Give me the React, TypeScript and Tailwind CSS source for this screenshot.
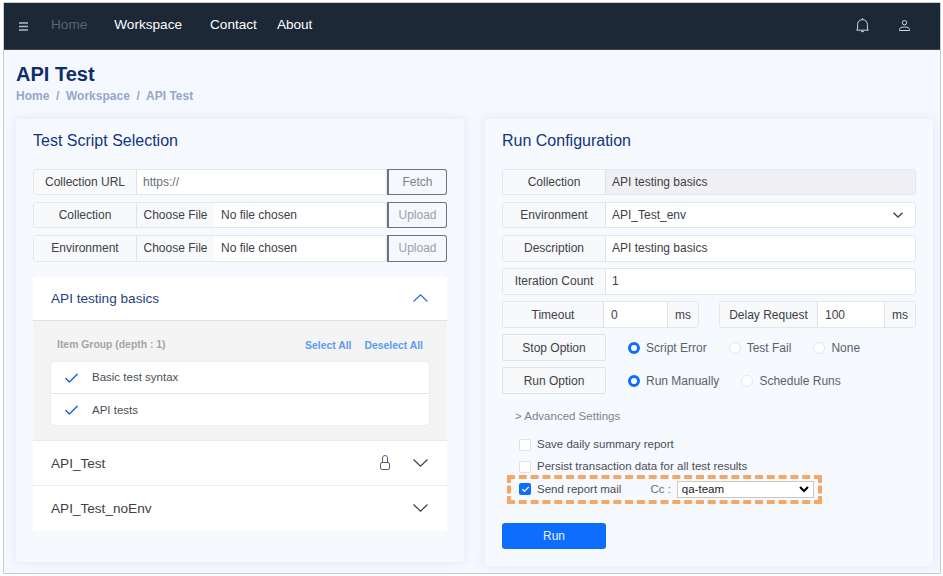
import React from "react";
import { Check } from "lucide-react";

const cellLabel =
  "flex items-center justify-center bg-[#f8f9fa] text-[#3d4148] shrink-0 border-r border-[#dee2e6]";

function Chevron({ up, className }: { up?: boolean; className?: string }) {
  return (
    <svg width="15" height="8" viewBox="0 0 15 8" fill="none" stroke="currentColor" strokeWidth="1.2" className={className}>
      <path d={up ? "M0.5 7.5 7.5 0.8 14.5 7.5" : "M0.5 0.5 7.5 7.2 14.5 0.5"} />
    </svg>
  );
}

function Row({ label, children }: { label: string; children: React.ReactNode }) {
  return (
    <div className="flex h-[26.4px] rounded-[3px] border border-[#e3e6ec] overflow-hidden bg-white">
      <div className={`${cellLabel} w-[103px]`}>{label}</div>
      {children}
    </div>
  );
}

function FileRow({ label }: { label: string }) {
  return (
    <div className="flex h-[26.4px]">
      <div className="flex flex-1 rounded-l-[3px] border border-[#e3e6ec] overflow-hidden bg-white">
        <div className={`${cellLabel} w-[103px]`}>{label}</div>
        <div className="flex items-center justify-center w-[77px] bg-[#f8f9fa] text-[#3d4148]">Choose File</div>
        <div className="flex items-center pl-[7px] text-[#3d4148]">No file chosen</div>
      </div>
      <button className="w-[60px] rounded-r-[3px] border border-[#6c757d] border-l-2 text-[#9aa0a8] bg-[#f5f8ff]">
        Upload
      </button>
    </div>
  );
}

function Radio({ label, on }: { label: string; on?: boolean }) {
  return (
    <div className="flex items-center gap-[6px] text-[#5d6168]">
      {on ? (
        <span className="size-[12px] rounded-full border-[3.5px] border-[#0d6efd] bg-white" />
      ) : (
        <span className="size-[12px] rounded-full border border-[#e3e6ec] bg-white" />
      )}
      {label}
    </div>
  );
}

function Box({ label }: { label: string }) {
  return (
    <div className="flex items-center gap-[6px] pl-[17px] h-[22px] text-[#4a4e55] text-[11.5px]">
      <span className="size-[12px] rounded-[2px] border border-[#dfe2e8] bg-white" />
      {label}
    </div>
  );
}

export default function App() {
  return (
    <div className="h-[576px] w-[943px] bg-white pt-[2px] pl-[3px] pr-[2px] pb-[2px] font-['Liberation_Sans',sans-serif] text-[12px]">
      <div className="h-full flex flex-col border border-[#c9ccd1] bg-[#f5f8ff] overflow-hidden">
        <nav className="h-[47px] shrink-0 bg-[#1c2835] border-b border-[#3e4853] flex items-center text-[13.6px] text-white pl-[15px] pr-[30px] pb-[1px]">
          <svg width="9" height="9" viewBox="0 0 9 9" stroke="#b4b9be" strokeWidth="1.4" className="mr-[23px] mt-[2px]">
            <path d="M0 1h9M0 4.5h9M0 8h9" />
          </svg>
          <span className="text-[#5a636e] mr-[27px]">Home</span>
          <span className="mr-[28px]">Workspace</span>
          <span className="mr-[20px]">Contact</span>
          <span>About</span>
          <svg width="13" height="15" viewBox="0 0 13 15" fill="none" stroke="#d3d7db" strokeWidth="1" className="ml-auto mr-[30px] -mt-[1px]">
            <path d="M1.6 11V6.5a4.9 4.9 0 0 1 9.8 0V11l1 1.2H.6Z" />
            <path d="M6.5 .2v1.4M5.2 13.6h2.6" />
          </svg>
          <svg width="11" height="11" viewBox="0 0 11 11" fill="none" stroke="#d3d7db" strokeWidth="1" className="-mt-[1px]">
            <circle cx="5.5" cy="2.7" r="2.2" />
            <path d="M.5 10.5v-1C.5 8 2 7 5.5 7s5 1 5 2.5v1Z" />
          </svg>
        </nav>

        <div className="px-[12px] pt-[12px] h-[69px] shrink-0">
          <h1 className="text-[20px] leading-[24px] font-bold text-[#0f2d6e]">API Test</h1>
          <div className="mt-[3px] font-bold text-[#97a6c9] leading-[14px]">Home &nbsp;/&nbsp; Workspace &nbsp;/&nbsp; API Test</div>
        </div>

        <div className="flex items-start gap-[21px] pl-[12px]">
          <section className="w-[448px] shrink-0 h-[443px] rounded-[4px] bg-[#f6f9fe] shadow-[0_0_12px_rgba(90,110,160,0.12)] px-[17px] pt-[13px]">
            <h2 className="text-[16px] leading-[18px] text-[#12357f] mb-[19px]">Test Script Selection</h2>
            <div className="flex flex-col gap-[6.7px]">
              <div className="flex h-[26.4px]">
                <div className="flex flex-1 rounded-l-[3px] border border-[#e3e6ec] overflow-hidden bg-white">
                  <div className={`${cellLabel} w-[103px]`}>Collection URL</div>
                  <div className="flex items-center pl-[6px] text-[#6c7076]">https://</div>
                </div>
                <button className="w-[60px] rounded-r-[3px] border border-[#6c757d] border-l-2 text-[#7d838b] bg-[#f5f8ff]">
                  Fetch
                </button>
              </div>
              <FileRow label="Collection" />
              <FileRow label="Environment" />
            </div>

            <div className="mt-[15.4px] rounded-[3px] bg-white overflow-hidden">
              <div className="flex items-center h-[44px] pl-[18px] pr-[19px] text-[13.6px] text-[#1f3f7f] border-b border-[#dfe1e4]">
                <span className="mt-[2px]">API testing basics</span>
                <Chevron up className="ml-auto text-[#2f6fd6]" />
              </div>
              <div className="h-[120px] bg-[#f4f4f4] px-[18px] pt-[16px] border-b border-[#e9e9e9]">
                <div className="flex items-start px-[6px] text-[10.4px] font-bold h-[25px]">
                  <span className="text-[#a3a5a9]">Item Group (depth : 1)</span>
                  <span className="ml-auto text-[#5b9bf5] mt-[1px]">Select All</span>
                  <span className="ml-[13px] text-[#5b9bf5] mt-[1px]">Deselect All</span>
                </div>
                <div className="rounded-[3px] bg-white shadow-[0_0_2px_rgba(0,0,0,0.12)] text-[11.5px] text-[#4a4e55]">
                  <div className="flex items-center h-[32px] pl-[12px] border-b border-[#e3e5e8]">
                    <Check className="size-[17px] text-[#1f62c4] mr-[12px] mt-[2px]" strokeWidth={2} />
                    <span>Basic test syntax</span>
                  </div>
                  <div className="flex items-center h-[31px] pl-[12px]">
                    <Check className="size-[17px] text-[#1f62c4] mr-[12px] mt-[2px]" strokeWidth={2} />
                    <span className="mt-[2px]">API tests</span>
                  </div>
                </div>
              </div>
              <div className="flex items-center h-[45px] pl-[18px] pr-[19px] text-[13.6px] text-[#3d4148] border-b border-[#ececec]">
                <span className="mt-[2px]">API_Test</span>
                <svg width="10" height="15" viewBox="0 0 10 15" fill="none" stroke="#5a5d78" strokeWidth="1" className="ml-auto mr-[23px]">
                  <rect x=".5" y="7.5" width="9" height="7" rx="1.5" />
                  <path d="M2.5 7.5V3a2.5 2.5 0 0 1 5 0v4.5" />
                </svg>
                <Chevron className="text-[#3d4148]" />
              </div>
              <div className="flex items-center justify-between h-[45px] pl-[18px] pr-[19px] text-[13.6px] text-[#3d4148]">
                <span className="mt-[2px]">API_Test_noEnv</span>
                <Chevron className="text-[#3d4148]" />
              </div>
            </div>
          </section>

          <section className="w-[448px] shrink-0 h-[447px] rounded-[4px] bg-[#f6f9fe] shadow-[0_0_12px_rgba(90,110,160,0.12)] px-[17px] pt-[13px]">
            <h2 className="text-[16px] leading-[18px] text-[#12357f] mb-[19px]">Run Configuration</h2>
            <div className="flex flex-col gap-[6.7px]">
              <Row label="Collection">
                <div className="flex-1 flex items-center pl-[6px] bg-[#f0eff3] text-[#3d4148]">API testing basics</div>
              </Row>
              <Row label="Environment">
                <div className="flex-1 flex items-center pl-[6px] pr-[12px] text-[#3d4148]">
                  API_Test_env
                  <svg width="10" height="6" viewBox="0 0 10 6" fill="none" stroke="#3d4148" strokeWidth="1.3" className="ml-auto">
                    <path d="M.5 .7 5 5l4.5-4.3" />
                  </svg>
                </div>
              </Row>
              <Row label="Description">
                <div className="flex-1 flex items-center pl-[6px] text-[#3d4148]">API testing basics</div>
              </Row>
              <Row label="Iteration Count">
                <div className="flex-1 flex items-center pl-[6px] text-[#3d4148]">1</div>
              </Row>
              <div className="flex justify-between">
                <div className="flex h-[26.4px] w-[197px] rounded-[3px] border border-[#e3e6ec] overflow-hidden bg-white">
                  <div className={`${cellLabel} w-[101px]`}>Timeout</div>
                  <div className="flex-1 flex items-center pl-[7px] text-[#3d4148]">0</div>
                  <div className="w-[31px] flex items-center justify-center bg-[#f8f9fa] border-l border-[#e3e6ec] text-[#3d4148]">ms</div>
                </div>
                <div className="flex h-[26.4px] w-[197px] rounded-[3px] border border-[#e3e6ec] overflow-hidden bg-white">
                  <div className={`${cellLabel} w-[98px]`}>Delay Request</div>
                  <div className="flex-1 flex items-center pl-[7px] text-[#3d4148]">100</div>
                  <div className="w-[31px] flex items-center justify-center bg-[#f8f9fa] border-l border-[#e3e6ec] text-[#3d4148]">ms</div>
                </div>
              </div>
              <div className="flex items-center gap-[22px] h-[26.4px]">
                <div className="w-[104px] h-full flex items-center justify-center rounded-[2px] border border-[#dfe2e6] bg-[#f8f9fa] text-[#3d4148]">Stop Option</div>
                <Radio label="Script Error" on />
                <Radio label="Test Fail" />
                <Radio label="None" />
              </div>
              <div className="flex items-center gap-[22px] h-[26.4px]">
                <div className="w-[104px] h-full flex items-center justify-center rounded-[2px] border border-[#dfe2e6] bg-[#f8f9fa] text-[#3d4148]">Run Option</div>
                <Radio label="Run Manually" on />
                <Radio label="Schedule Runs" />
              </div>
            </div>

            <div className="pl-[13px] mt-[16px] text-[11.5px] leading-[13px] text-[#7b8494]">&gt; Advanced Settings</div>
            <div className="mt-[11px]">
              <Box label="Save daily summary report" />
              <Box label="Persist transaction data for all test results" />
              <div className="flex items-center w-[315px] h-[29px] -mt-[3px] ml-[5px] pl-[8px] border-4 border-dashed border-[#f4a867] text-[11.5px] text-[#4a4e55]">
                <span className="flex items-center justify-center size-[12px] rounded-[2px] bg-[#0d6efd]">
                  <Check className="size-[9px] text-white" strokeWidth={3} />
                </span>
                <span className="ml-[6px]">Send report mail</span>
                <span className="ml-[29px] text-[#6c7076]">Cc :</span>
                <div className="ml-[6px] flex items-center w-[137px] h-[17px] border border-[#c9c9c9] bg-white pl-[4px] pr-[3px] text-[#222]">
                  qa-team
                  <svg width="10" height="7" viewBox="0 0 10 7" fill="none" stroke="#000" strokeWidth="2" className="ml-auto mr-[1px]">
                    <path d="M1 1l4 4 4-4" />
                  </svg>
                </div>
              </div>
            </div>
            <button className="mt-[19px] w-[104px] h-[26px] rounded-[3px] bg-[#0d6efd] text-[#e6efff]">Run</button>
          </section>
        </div>
      </div>
    </div>
  );
}
